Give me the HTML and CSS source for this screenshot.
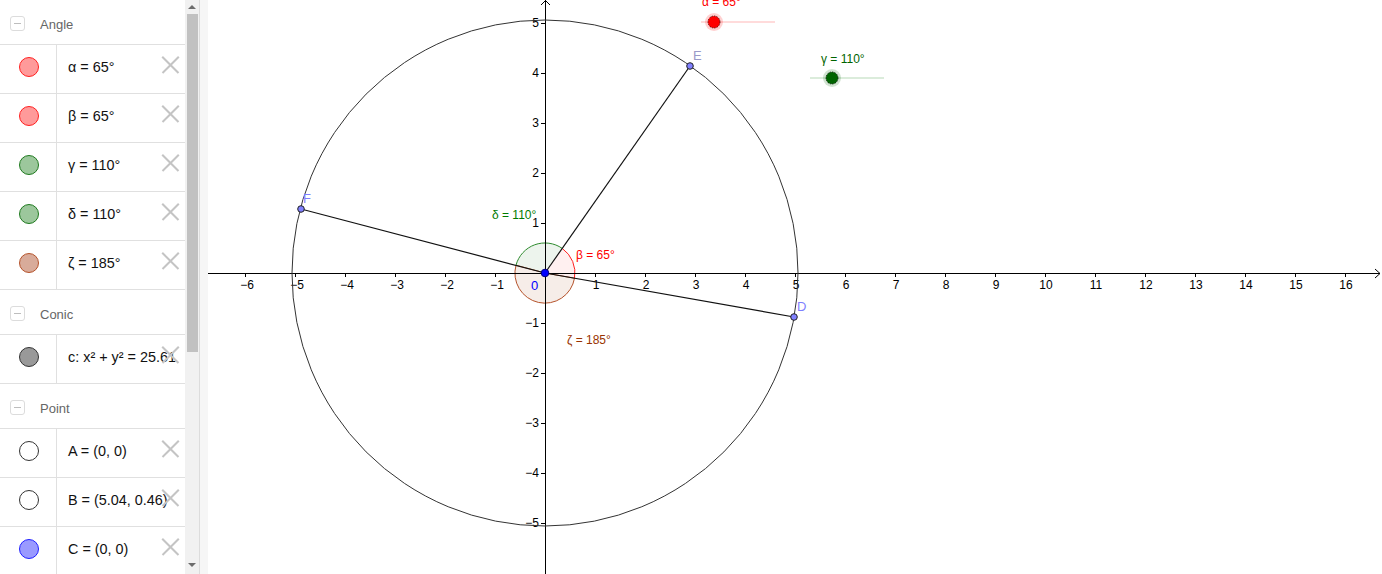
FILE: index.html
```html
<!DOCTYPE html>
<html>
<head>
<meta charset="utf-8">
<link rel="stylesheet" href="styles.css">
</head>
<body>
<div class="panel">
  <div class="list">
    <div class="header"><span class="toggle"></span><span class="htext">Angle</span></div>
    <div class="row"><div class="mark"><span class="dot dot-red"></span></div><div class="val">α = 65°</div><span class="del"></span></div>
    <div class="row"><div class="mark"><span class="dot dot-red"></span></div><div class="val">β = 65°</div><span class="del"></span></div>
    <div class="row"><div class="mark"><span class="dot dot-green"></span></div><div class="val">γ = 110°</div><span class="del"></span></div>
    <div class="row"><div class="mark"><span class="dot dot-green"></span></div><div class="val">δ = 110°</div><span class="del"></span></div>
    <div class="row"><div class="mark"><span class="dot dot-brown"></span></div><div class="val">ζ = 185°</div><span class="del"></span></div>
    <div class="header"><span class="toggle"></span><span class="htext">Conic</span></div>
    <div class="row"><div class="mark"><span class="dot dot-gray"></span></div><div class="val">c: x² + y² = 25.61</div><span class="del"></span></div>
    <div class="header"><span class="toggle"></span><span class="htext">Point</span></div>
    <div class="row"><div class="mark"><span class="dot dot-white"></span></div><div class="val">A = (0, 0)</div><span class="del"></span></div>
    <div class="row"><div class="mark"><span class="dot dot-white"></span></div><div class="val">B = (5.04, 0.46)</div><span class="del"></span></div>
    <div class="row"><div class="mark"><span class="dot dot-blue"></span></div><div class="val">C = (0, 0)</div><span class="del"></span></div>
  </div>
  <div class="scrollbar">
    <span class="arrow-up"></span>
    <div class="thumb"></div>
    <span class="arrow-down"></span>
  </div>
</div>
<div class="splitter"></div>
<div class="graph">
<svg class="canvas" width="1174" height="574" viewBox="208 0 1174 574" xmlns="http://www.w3.org/2000/svg">
  <!-- angle sectors -->
  <path d="M545,273 L516.0,265.2 A30,30 0 1 0 574.5,278.2 Z" fill="rgba(153,51,0,0.09)" stroke="#b5532b" stroke-width="1"/>
  <path d="M545,273 L574.5,278.2 A30,30 0 0 0 562.2,248.4 Z" fill="rgba(255,0,0,0.06)" stroke="none"/>
  <path d="M574.5,278.2 A30,30 0 0 0 562.2,248.4" fill="none" stroke="#ff2020" stroke-width="1"/>
  <path d="M545,273 L562.2,248.4 A30,30 0 0 0 516.0,265.2 Z" fill="rgba(0,100,0,0.07)" stroke="none"/>
  <path d="M562.2,248.4 A30,30 0 0 0 516.0,265.2" fill="none" stroke="#2e8b2e" stroke-width="1"/>

  <!-- axes -->
  <line x1="208" y1="273.5" x2="1380" y2="273.5" stroke="#000" stroke-width="1"/>
  <polyline points="1375,269 1380,273.5 1375,278" fill="none" stroke="#000" stroke-width="1"/>
  <line x1="545.5" y1="0" x2="545.5" y2="574" stroke="#000" stroke-width="1"/>
  <polyline points="541,5 545.5,0.5 550,5" fill="none" stroke="#000" stroke-width="1"/>

  <g stroke="#000" stroke-width="1">
    <line x1="245.5" y1="273" x2="245.5" y2="277"/>
    <line x1="295.5" y1="273" x2="295.5" y2="277"/>
    <line x1="345.5" y1="273" x2="345.5" y2="277"/>
    <line x1="395.5" y1="273" x2="395.5" y2="277"/>
    <line x1="445.5" y1="273" x2="445.5" y2="277"/>
    <line x1="495.5" y1="273" x2="495.5" y2="277"/>
    <line x1="595.5" y1="273" x2="595.5" y2="277"/>
    <line x1="645.5" y1="273" x2="645.5" y2="277"/>
    <line x1="695.5" y1="273" x2="695.5" y2="277"/>
    <line x1="745.5" y1="273" x2="745.5" y2="277"/>
    <line x1="795.5" y1="273" x2="795.5" y2="277"/>
    <line x1="845.5" y1="273" x2="845.5" y2="277"/>
    <line x1="895.5" y1="273" x2="895.5" y2="277"/>
    <line x1="945.5" y1="273" x2="945.5" y2="277"/>
    <line x1="995.5" y1="273" x2="995.5" y2="277"/>
    <line x1="1045.5" y1="273" x2="1045.5" y2="277"/>
    <line x1="1095.5" y1="273" x2="1095.5" y2="277"/>
    <line x1="1145.5" y1="273" x2="1145.5" y2="277"/>
    <line x1="1195.5" y1="273" x2="1195.5" y2="277"/>
    <line x1="1245.5" y1="273" x2="1245.5" y2="277"/>
    <line x1="1295.5" y1="273" x2="1295.5" y2="277"/>
    <line x1="1345.5" y1="273" x2="1345.5" y2="277"/>
    <line x1="541" y1="23.5" x2="545" y2="23.5"/>
    <line x1="541" y1="73.5" x2="545" y2="73.5"/>
    <line x1="541" y1="123.5" x2="545" y2="123.5"/>
    <line x1="541" y1="173.5" x2="545" y2="173.5"/>
    <line x1="541" y1="223.5" x2="545" y2="223.5"/>
    <line x1="541" y1="323.5" x2="545" y2="323.5"/>
    <line x1="541" y1="373.5" x2="545" y2="373.5"/>
    <line x1="541" y1="423.5" x2="545" y2="423.5"/>
    <line x1="541" y1="473.5" x2="545" y2="473.5"/>
    <line x1="541" y1="523.5" x2="545" y2="523.5"/>
  </g>

  <g class="ticklabel" text-anchor="middle">
    <text x="247" y="289">−6</text>
    <text x="297" y="289">−5</text>
    <text x="347" y="289">−4</text>
    <text x="397" y="289">−3</text>
    <text x="447" y="289">−2</text>
    <text x="497" y="289">−1</text>
    <text x="596" y="289">1</text>
    <text x="646" y="289">2</text>
    <text x="696" y="289">3</text>
    <text x="746" y="289">4</text>
    <text x="796" y="289">5</text>
    <text x="846" y="289">6</text>
    <text x="896" y="289">7</text>
    <text x="946" y="289">8</text>
    <text x="996" y="289">9</text>
    <text x="1046" y="289">10</text>
    <text x="1096" y="289">11</text>
    <text x="1146" y="289">12</text>
    <text x="1196" y="289">13</text>
    <text x="1246" y="289">14</text>
    <text x="1296" y="289">15</text>
    <text x="1346" y="289">16</text>
  </g>
  <g class="ticklabel" text-anchor="end">
    <text x="539" y="27">5</text>
    <text x="539" y="77">4</text>
    <text x="539" y="127">3</text>
    <text x="539" y="177">2</text>
    <text x="539" y="227">1</text>
    <text x="539" y="327">−1</text>
    <text x="539" y="377">−2</text>
    <text x="539" y="427">−3</text>
    <text x="539" y="477">−4</text>
    <text x="539" y="527">−5</text>
  </g>

  <!-- circle -->
  <circle cx="545" cy="273" r="253" fill="none" stroke="#333" stroke-width="1"/>

  <!-- segments -->
  <g stroke="#111" stroke-width="1.2">
    <line x1="545" y1="273" x2="690" y2="66"/>
    <line x1="545" y1="273" x2="301" y2="209"/>
    <line x1="545" y1="273" x2="794" y2="317"/>
  </g>

  <!-- points -->
  <g fill="#8080ff" stroke="#222" stroke-width="1">
    <circle cx="690" cy="66" r="3.3"/>
    <circle cx="301" cy="209" r="3.3"/>
    <circle cx="794" cy="317" r="3.3"/>
  </g>
  <circle cx="545" cy="273" r="3.8" fill="#0000ff" stroke="#00007a" stroke-width="1"/>

  <text class="plabel grey" x="693" y="60">E</text>
  <text class="plabel" x="303" y="203">F</text>
  <text class="plabel" x="797" y="311">D</text>
  <text class="origin" x="531" y="290">0</text>

  <text class="alabel red" x="576" y="259">β = 65°</text>
  <text class="alabel green" x="492" y="219">δ = 110°</text>
  <text class="alabel brown" x="567" y="344">ζ = 185°</text>

  <!-- sliders -->
  <line x1="701" y1="22" x2="775" y2="22" stroke="#ffb8b8" stroke-width="1.2"/>
  <circle cx="714" cy="22" r="9" fill="rgba(255,0,0,0.18)"/>
  <circle cx="714" cy="22" r="6" fill="#ff0000" stroke="#400" stroke-width="0.8" stroke-dasharray="1.5 1"/>
  <text class="alabel red" x="702" y="6">α = 65°</text>

  <line x1="810" y1="78" x2="884" y2="78" stroke="#b8dab8" stroke-width="1.2"/>
  <circle cx="832" cy="78" r="9" fill="rgba(0,100,0,0.18)"/>
  <circle cx="832" cy="78" r="6" fill="#006400" stroke="#001800" stroke-width="0.8" stroke-dasharray="1.5 1"/>
  <text class="alabel dgreen" x="821" y="63">γ = 110°</text>
</svg>
</div>
</body>
</html>
```

FILE: styles.css
```css
html, body {
  margin: 0;
  padding: 0;
}
body {
  width: 1382px;
  height: 574px;
  overflow: hidden;
  display: flex;
  background: #fff;
  font-family: "Liberation Sans", Arial, sans-serif;
}
.panel {
  width: 200px;
  height: 574px;
  display: flex;
  flex: none;
}
.list {
  width: 185px;
  height: 574px;
  overflow: hidden;
  flex: none;
}
.header {
  height: 44px;
  border-bottom: 1px solid #e0e0e0;
  display: flex;
  align-items: center;
  box-sizing: content-box;
}
.toggle {
  width: 13px;
  height: 13px;
  margin-left: 10px;
  margin-top: 3px;
  border: 1px solid #dcdcdc;
  border-radius: 3px;
  position: relative;
  flex: none;
}
.toggle::after {
  content: "";
  position: absolute;
  left: 3px;
  right: 3px;
  top: 6px;
  height: 1px;
  background: #bdbdbd;
}
.htext {
  margin-left: 15px;
  margin-top: 4px;
  font-size: 13px;
  color: #666;
}
.row {
  height: 48px;
  border-bottom: 1px solid #e0e0e0;
  display: flex;
  position: relative;
}
.mark {
  width: 56px;
  border-right: 1px solid #e0e0e0;
  display: flex;
  align-items: center;
  justify-content: center;
  flex: none;
  padding-bottom: 4px;
  box-sizing: content-box;
}
.dot {
  width: 18px;
  height: 18px;
  border-radius: 50%;
  border: 1px solid #333;
  box-sizing: content-box;
  margin-left: 1px;
}
.dot-red { background: #ff9a9a; border-color: #ff2020; }
.dot-green { background: #9cc79c; border-color: #1f7a1f; }
.dot-brown { background: #d8ab9a; border-color: #b5532b; }
.dot-gray { background: #999; border-color: #333; }
.dot-white { background: #fff; border-color: #333; }
.dot-blue { background: #9a9aff; border-color: #2020ff; }
.val {
  padding-left: 11px;
  padding-bottom: 4px;
  display: flex;
  align-items: center;
  font-size: 14.4px;
  color: #111;
  white-space: nowrap;
}
.del {
  position: absolute;
  right: 6px;
  top: 11px;
  width: 17px;
  height: 17px;
}
.del::before, .del::after {
  content: "";
  position: absolute;
  left: -3px;
  top: 8px;
  width: 23px;
  height: 1.6px;
  background: #c4c4c4;
}
.del::before { transform: rotate(45deg); }
.del::after { transform: rotate(-45deg); }
.scrollbar {
  width: 14px;
  height: 574px;
  background: #f1f1f1;
  border-right: 1px solid #dcdcdc;
  display: flex;
  flex-direction: column;
  align-items: center;
  flex: none;
}
.arrow-up {
  margin-top: 5px;
  width: 0;
  height: 0;
  border-left: 4px solid transparent;
  border-right: 4px solid transparent;
  border-bottom: 4px solid #6c6c6c;
}
.thumb {
  margin-top: 5px;
  width: 11px;
  height: 338px;
  background: #c1c1c1;
}
.arrow-down {
  margin-top: auto;
  margin-bottom: 7px;
  width: 0;
  height: 0;
  border-left: 4px solid transparent;
  border-right: 4px solid transparent;
  border-top: 4px solid #6c6c6c;
}
.splitter {
  width: 8px;
  height: 574px;
  background: #f6f6f6;
  flex: none;
}
.graph {
  flex: 1;
  height: 574px;
  overflow: hidden;
}
.canvas {
  display: block;
}
.ticklabel {
  font-family: "Liberation Sans", Arial, sans-serif;
  font-size: 12px;
  fill: #000;
}
.plabel {
  font-family: "Liberation Sans", Arial, sans-serif;
  font-size: 13px;
  fill: #7f7fff;
}
.plabel.grey { fill: #9a9ac8; }
.origin {
  font-family: "Liberation Sans", Arial, sans-serif;
  font-size: 13px;
  fill: #0000ff;
}
.alabel {
  font-family: "Liberation Sans", Arial, sans-serif;
  font-size: 12px;
}
.red { fill: #ff0000; }
.green { fill: #007a00; }
.dgreen { fill: #006400; }
.brown { fill: #993300; }
```
